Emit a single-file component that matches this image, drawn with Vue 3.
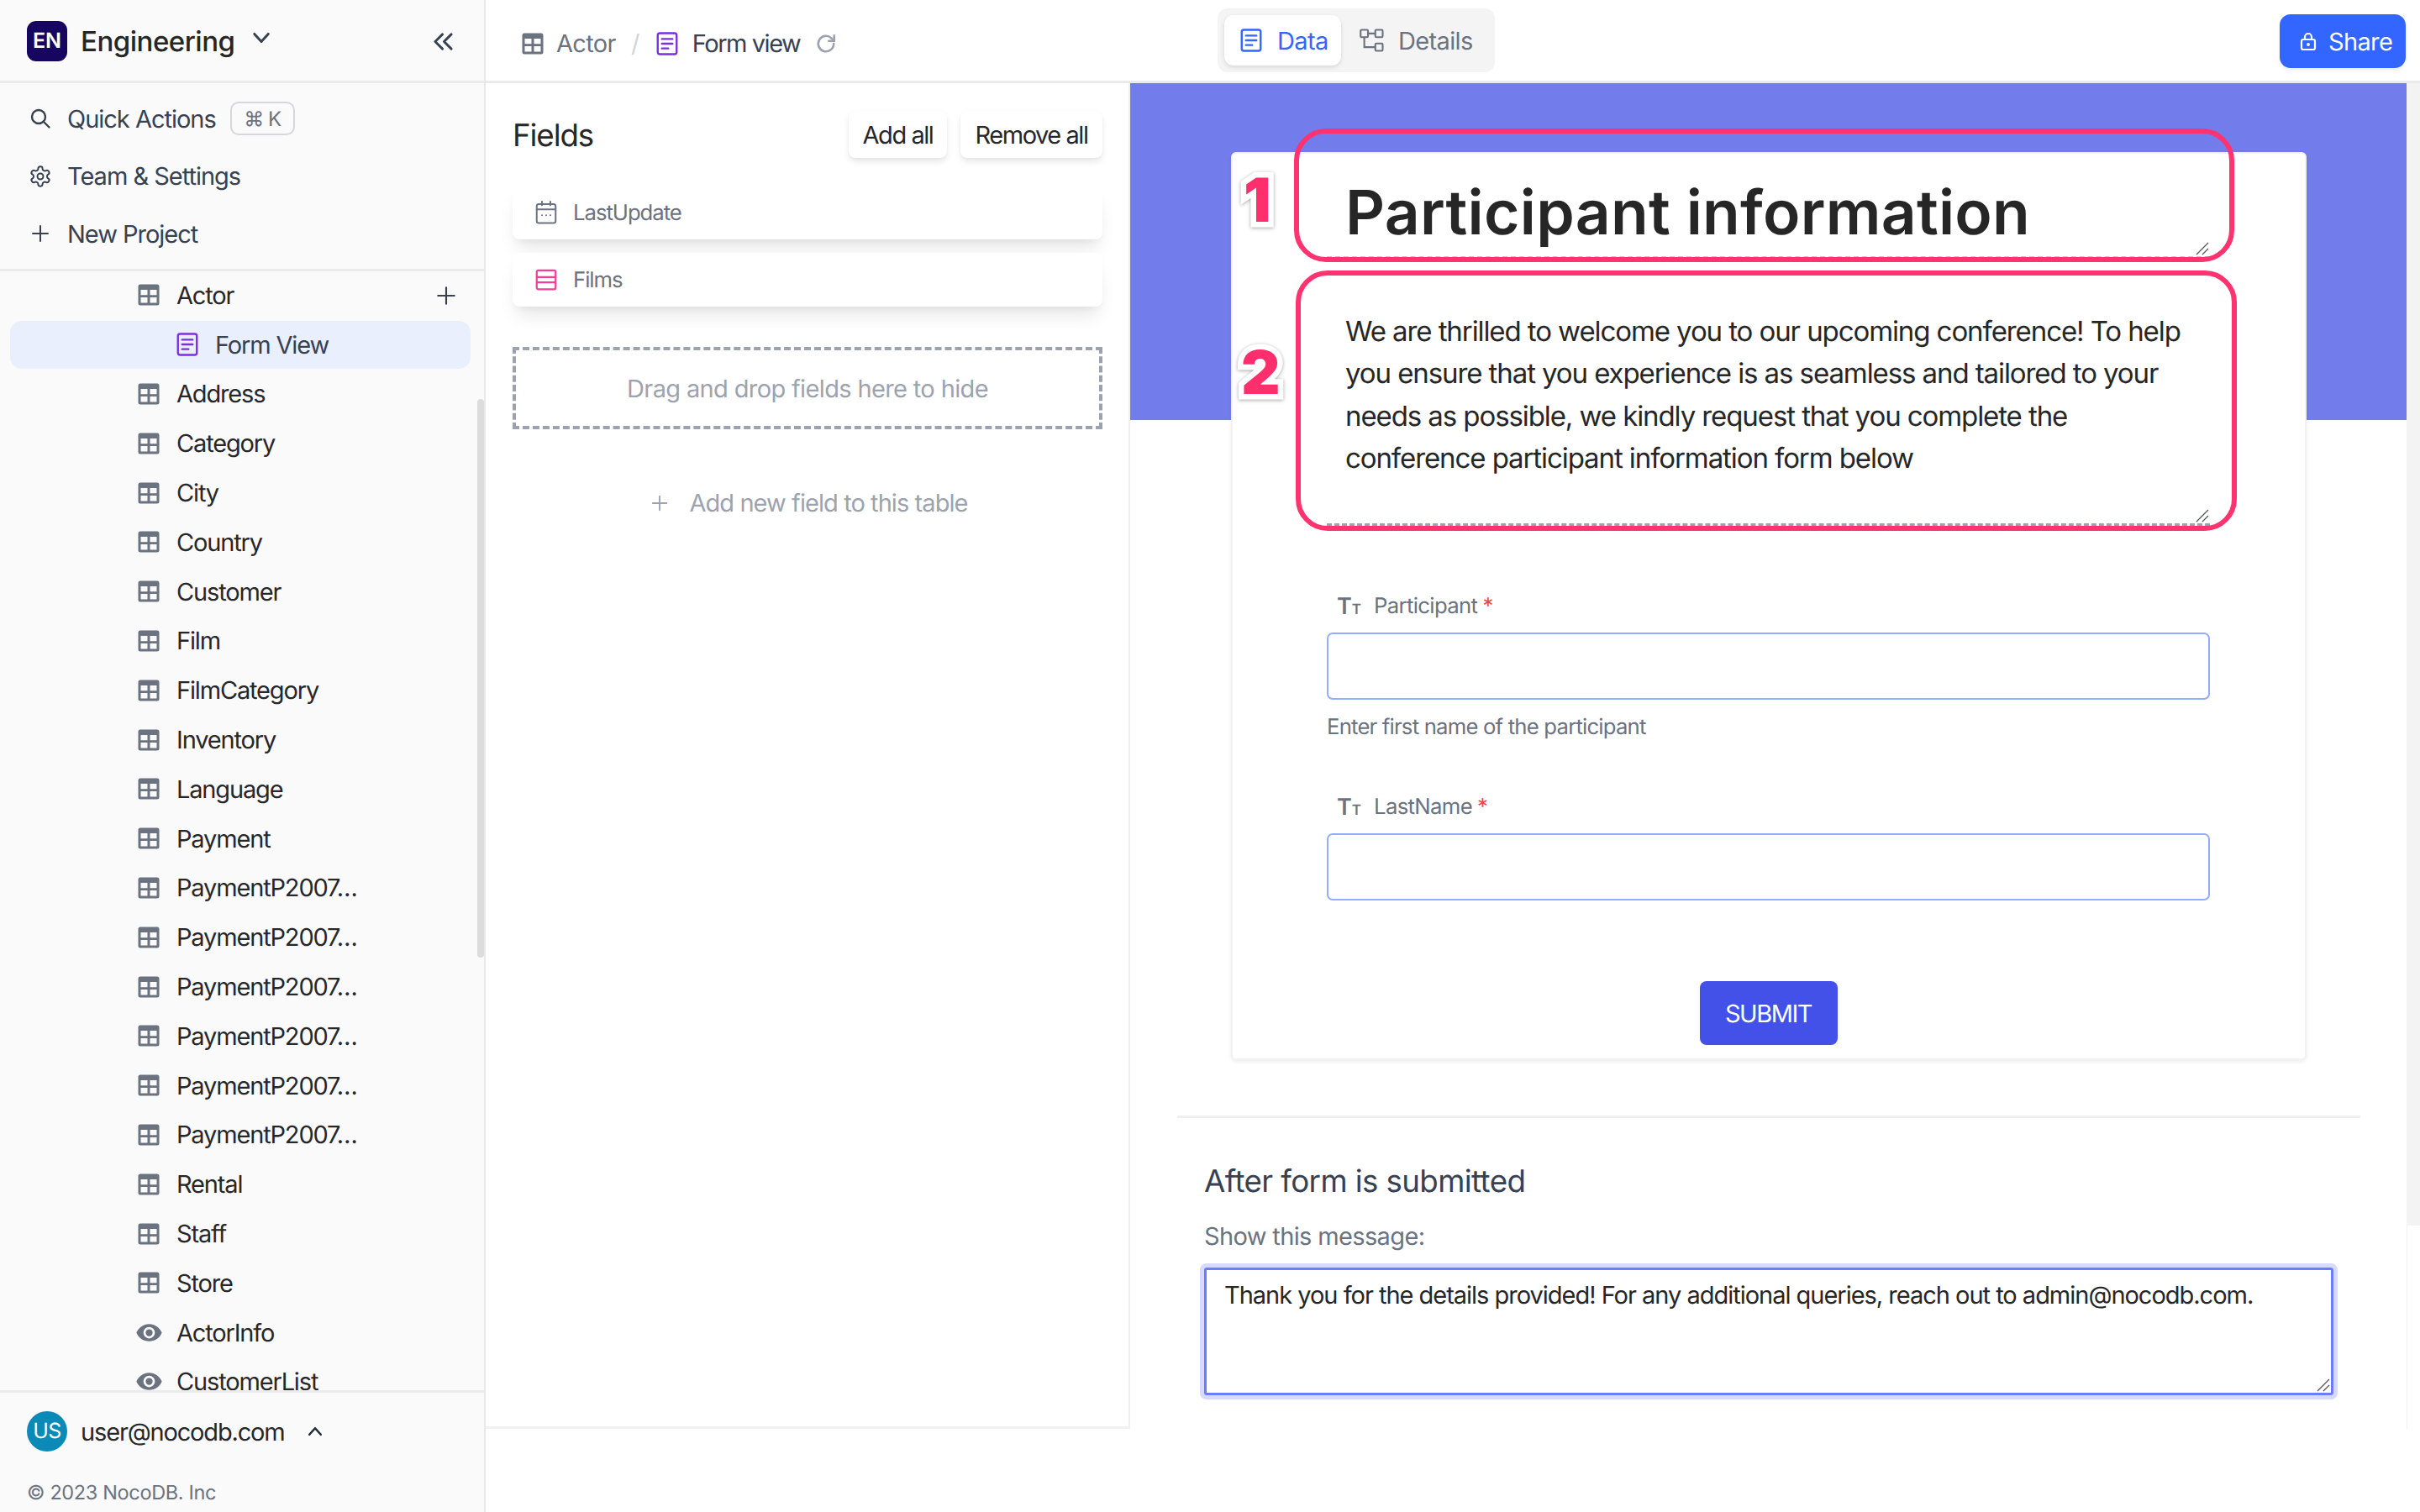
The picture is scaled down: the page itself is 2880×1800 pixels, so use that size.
<script setup>
const tables = ['Address','Category','City','Country','Customer','Film','FilmCategory','Inventory','Language','Payment','PaymentP2007…','PaymentP2007…','PaymentP2007…','PaymentP2007…','PaymentP2007…','PaymentP2007…','Rental','Staff','Store']
const views = ['ActorInfo','CustomerList']
</script>

<template>
  <div class="root">
    <svg class="defs" width="0" height="0">
      <symbol id="i-table" viewBox="0 0 24 24"><path fill="currentColor" fill-rule="evenodd" d="M4 2h16a2 2 0 0 1 2 2v16a2 2 0 0 1-2 2H4a2 2 0 0 1-2-2V4a2 2 0 0 1 2-2z M4.400 7.200v5h6.400v-5z M13.200 7.200v5h6.400v-5z M4.400 14.400v5.200h6.400v-5.200z M13.200 14.400v5.200h6.400v-5.200z"/></symbol>
      <symbol id="i-form" viewBox="0 0 24 24"><g fill="none" stroke="currentColor" stroke-width="1.900" stroke-linecap="round"><rect x="3" y="2" width="18" height="20" rx="2"/><path d="M7 7.500h10M7 12h10M7 16.500h6"/></g></symbol>
      <symbol id="i-eye" viewBox="0 0 24 24"><path fill="currentColor" d="M12 9a3 3 0 0 0-3 3 3 3 0 0 0 3 3 3 3 0 0 0 3-3 3 3 0 0 0-3-3m0 8a5 5 0 0 1-5-5 5 5 0 0 1 5-5 5 5 0 0 1 5 5 5 5 0 0 1-5 5m0-12.500C7 4.500 2.730 7.610 1 12c1.730 4.390 6 7.500 11 7.500s9.270-3.110 11-7.500c-1.730-4.390-6-7.500-11-7.500z"/></symbol>
      <symbol id="i-plus" viewBox="0 0 24 24"><path fill="none" stroke="currentColor" stroke-width="2" stroke-linecap="round" d="M12 3v18M3 12h18"/></symbol>
      <symbol id="i-grip" viewBox="0 0 16 16"><path fill="none" stroke="#555" stroke-width="1.300" d="M1 15L15 1M8 15l7-7"/></symbol>
    </svg>

    <aside class="sidebar">
      <header class="side-head">
        <span class="badge">EN</span>
        <span class="ws">Engineering</span>
        <svg class="chev" viewBox="0 0 24 24"><path fill="none" stroke="#374151" stroke-width="3.200" stroke-linecap="round" stroke-linejoin="round" d="M3 7l9 10 9-10"/></svg>
        <svg class="coll" viewBox="0 0 24 24"><path fill="none" stroke="#374151" stroke-width="3" stroke-linecap="round" stroke-linejoin="round" d="M11 3l-9 9 9 9M22 3l-9 9 9 9"/></svg>
      </header>
      <nav class="actions">
        <div class="act">
          <svg class="act-ic" viewBox="0 0 24 24"><g fill="none" stroke="#374151" stroke-width="2.400" stroke-linecap="round"><circle cx="10" cy="10" r="8"/><path d="M16 16l6.500 6.500"/></g></svg>
          <span>Quick Actions</span><kbd class="kbd">⌘ K</kbd>
        </div>
        <div class="act">
          <svg class="act-ic gear" viewBox="0 0 24 24"><g fill="none" stroke="#374151" stroke-width="1.700" stroke-linecap="round" stroke-linejoin="round"><path d="M12.220 2h-.44a2 2 0 0 0-2 2v.18a2 2 0 0 1-1 1.730l-.43.25a2 2 0 0 1-2 0l-.15-.08a2 2 0 0 0-2.730.73l-.22.38a2 2 0 0 0 .73 2.730l.15.1a2 2 0 0 1 1 1.720v.51a2 2 0 0 1-1 1.740l-.15.09a2 2 0 0 0-.73 2.730l.22.38a2 2 0 0 0 2.730.73l.15-.08a2 2 0 0 1 2 0l.43.25a2 2 0 0 1 1 1.730V20a2 2 0 0 0 2 2h.44a2 2 0 0 0 2-2v-.18a2 2 0 0 1 1-1.730l.43-.25a2 2 0 0 1 2 0l.15.08a2 2 0 0 0 2.730-.73l.22-.39a2 2 0 0 0-.73-2.730l-.15-.08a2 2 0 0 1-1-1.740v-.5a2 2 0 0 1 1-1.740l.15-.09a2 2 0 0 0 .73-2.730l-.22-.38a2 2 0 0 0-2.730-.73l-.15.08a2 2 0 0 1-2 0l-.43-.25a2 2 0 0 1-1-1.730V4a2 2 0 0 0-2-2z"/><circle cx="12" cy="12" r="3"/></g></svg>
          <span>Team &amp; Settings</span>
        </div>
        <div class="act">
          <svg class="act-ic plus-ic"><use href="#i-plus"/></svg>
          <span>New Project</span>
        </div>
      </nav>
      <div class="tree">
        <div class="row"><svg class="ic"><use href="#i-table"/></svg><span class="nm">Actor</span><svg class="row-add"><use href="#i-plus"/></svg></div>
        <div class="row active"><svg class="ic form"><use href="#i-form"/></svg><span class="nm">Form View</span></div>
        <div v-for="(t, i) in tables" :key="i" class="row"><svg class="ic"><use href="#i-table"/></svg><span class="nm">{{ t }}</span></div>
        <div v-for="v in views" :key="v" class="row"><svg class="ic eye"><use href="#i-eye"/></svg><span class="nm">{{ v }}</span></div>
        <div class="thumb"></div>
      </div>
      <footer class="side-foot">
        <div class="user">
          <span class="avatar">US</span>
          <span class="mail">user@nocodb.com</span>
          <svg class="up" viewBox="0 0 24 24"><path fill="none" stroke="#1f2937" stroke-width="3.400" stroke-linecap="round" stroke-linejoin="round" d="M3 17l9-10 9 10"/></svg>
        </div>
        <div class="copy">© 2023 NocoDB. Inc</div>
      </footer>
    </aside>

    <main class="main">
      <header class="topbar">
        <div class="crumbs">
          <svg class="crumb-ic"><use href="#i-table"/></svg>
          <span class="c1">Actor</span>
          <span class="slash">/</span>
          <svg class="crumb-ic form"><use href="#i-form"/></svg>
          <span class="c2">Form view</span>
          <svg class="refresh" viewBox="0 0 24 24"><g fill="none" stroke="#9ca3af" stroke-width="2.400" stroke-linecap="round" stroke-linejoin="round"><path d="M20.500 12a8.500 8.500 0 1 1-2.600-6.100L21 9"/><path d="M21 3v6h-6"/></g></svg>
        </div>
        <div class="tabs">
          <div class="tab on">
            <svg class="tab-ic"><use href="#i-form"/></svg><span>Data</span>
          </div>
          <div class="tab">
            <svg class="tab-ic" viewBox="0 0 24 24"><g fill="none" stroke="#6b7280" stroke-width="1.700"><rect x="1" y="2" width="7" height="7" rx="1"/><rect x="15" y="2" width="7" height="7" rx="1"/><rect x="15" y="15" width="7" height="7" rx="1"/><path d="M8 5.500h7M4.500 9v9.500H15"/></g></svg>
            <span>Details</span>
          </div>
        </div>
        <button class="share">
          <svg class="lock" viewBox="0 0 24 24"><g fill="none" stroke="#fff" stroke-width="2.200" stroke-linecap="round"><rect x="4" y="10" width="16" height="12" rx="2"/><path d="M8 10V7a4 4 0 0 1 8 0v3"/><circle cx="12" cy="16" r=".8"/></g></svg>
          <span>Share</span>
        </button>
      </header>

      <div class="content">
        <section class="fields">
          <div class="f-head">
            <h2 class="f-title">Fields</h2>
            <button class="mini">Add all</button>
            <button class="mini">Remove all</button>
          </div>
          <div class="f-card">
            <svg class="f-ic" viewBox="0 0 24 24"><g fill="none" stroke="#6b7280" stroke-width="1.600" stroke-linecap="round"><rect x="3" y="4" width="18" height="18" rx="2"/><path d="M3 9h18M8 1.500V5M16 1.500V5M8 14.500h.01M12 14.500h.01M16 14.500h.01"/></g></svg>
            <span>LastUpdate</span>
          </div>
          <div class="f-card">
            <svg class="f-ic" viewBox="0 0 24 24"><g fill="none" stroke="#f43f98" stroke-width="1.800"><rect x="3" y="3" width="18" height="18" rx="1.500"/><path d="M3 9.500h18M3 14.500h18"/></g></svg>
            <span>Films</span>
          </div>
          <div class="drop">Drag and drop fields here to hide</div>
          <div class="add-new"><svg class="add-ic"><use href="#i-plus"/></svg><span>Add new field to this table</span></div>
        </section>

        <section class="form-pane">
          <div class="form-wrap">
            <div class="card">
              <div class="ta title-ta">Participant information<svg class="grip"><use href="#i-grip"/></svg></div>
              <div class="ta desc-ta">We are thrilled to welcome you to our upcoming conference! To help you ensure that you experience is as seamless and tailored to your needs as possible, we kindly request that you complete the conference participant information form below<svg class="grip"><use href="#i-grip"/></svg></div>
              <div class="field first">
                <label class="lab"><span class="tt">T<small>T</small></span>Participant <em>*</em></label>
                <div class="inp"></div>
                <p class="help">Enter first name of the participant</p>
              </div>
              <div class="field second">
                <label class="lab"><span class="tt">T<small>T</small></span>LastName <em>*</em></label>
                <div class="inp"></div>
              </div>
              <div class="sub-row"><button class="submit">SUBMIT</button></div>

              <div class="mark m1">1</div>
              <div class="mark m2">2</div>
              <div class="anno a1"></div>
              <div class="anno a2"></div>
            </div>
            <div class="divider"></div>
            <div class="after">
              <h3 class="after-t">After form is submitted</h3>
              <p class="after-s">Show this message:</p>
              <div class="msg">Thank you for the details provided! For any additional queries, reach out to admin@nocodb.com.<svg class="grip"><use href="#i-grip"/></svg></div>
            </div>
          </div>
          <div class="rail"><div class="rail-track"></div></div>
        </section>
      </div>
    </main>
  </div>
</template>

<style>
html, body { margin: 0; background: #fff; }
</style>

<style scoped>
* { box-sizing: border-box; }
.defs { position: absolute; }
.root { width: 2880px; height: 1800px; display: flex; overflow: hidden; font-family: Inter, "Noto Sans", sans-serif; letter-spacing: -0.04em; text-rendering: geometricPrecision; color: #1f2937; background: #fff; }
button { font-family: inherit; letter-spacing: inherit; text-rendering: inherit; border: 0; padding: 0; }

.sidebar { width: 578px; flex: none; display: flex; flex-direction: column; background: #fafafa; border-right: 2px solid #e8e8e8; }
.side-head { height: 99px; flex: none; border-bottom: 3px solid #ebebeb; display: flex; align-items: center; padding: 2px 0 0 32px; }
.badge { width: 48px; height: 48px; border-radius: 11px; background: #17065f; color: #fff; font-size: 25px; font-weight: 600; display: flex; align-items: center; justify-content: center; letter-spacing: 0; }
.ws { margin-left: 16px; font-size: 33px; font-weight: 500; color: #262626; letter-spacing: -0.015em; }
.chev { width: 22px; height: 22px; margin-left: 21px; margin-top: -8px; }
.coll { width: 23px; height: 23px; margin-left: auto; margin-right: 37px; }
.actions { height: 224px; flex: none; padding-top: 8px; border-bottom: 3px solid #ebebeb; }
.act { height: 68.500px; display: flex; align-items: center; padding-left: 36px; font-size: 29px; color: #374151; letter-spacing: -0.035em; }
.act-ic { width: 24px; height: 24px; margin-right: 20px; flex: none; }
.act-ic.gear { width: 28px; height: 28px; margin: 0 18px 0 -2px; }
.plus-ic { color: #374151; }
.kbd { margin-left: 17px; width: 77px; height: 40px; border: 2px solid #d6d6db; border-radius: 10px; font: 24px Inter, sans-serif; color: #6b7280; display: flex; align-items: center; justify-content: center; }
.tree { flex: 1; min-height: 0; margin-top: -1px; overflow: hidden; position: relative; }
.row { height: 58.800px; display: flex; align-items: center; padding-left: 162px; font-size: 29px; color: #27272a; position: relative; letter-spacing: -0.04em; }
.ic { width: 30px; height: 30px; margin-right: 18px; color: #6b7280; flex: none; }
.ic.eye { width: 33px; height: 33px; margin: 0 16.500px 0 -1.500px; }
.nm { white-space: nowrap; }
.row-add { position: absolute; left: 518px; top: 17px; width: 26px; height: 26px; color: #374151; }
.row.active { padding-left: 208px; color: #374151; }
.row.active::before { content: ""; position: absolute; left: 12px; right: 16px; top: 1px; bottom: 1px; background: #e9effc; border-radius: 14px; }
.row.active > * { position: relative; }
.ic.form { color: #7c2fe0; width: 30px; margin-right: 18px; }
.thumb { position: absolute; right: 0; top: 153px; width: 8px; height: 665px; background: #dcdcdc; border-radius: 4px; }
.side-foot { flex: none; height: 145px; border-top: 3px solid #ebebeb; }
.user { display: flex; align-items: center; padding: 22px 0 0 32px; }
.avatar { width: 48px; height: 48px; border-radius: 50%; background: #0b8ab8; color: #fff; font-size: 25px; display: flex; align-items: center; justify-content: center; }
.mail { margin-left: 16px; font-size: 29px; color: #27272a; letter-spacing: -0.04em; }
.up { width: 18px; height: 18px; margin-left: 27px; }
.copy { margin: 34px 0 0 32px; font-size: 23.500px; color: #6b7280; letter-spacing: -0.015em; }

.main { flex: 1; min-width: 0; display: flex; flex-direction: column; }
.topbar { height: 99px; flex: none; border-bottom: 3px solid #ebebeb; display: flex; align-items: center; position: relative; }
.crumbs { display: flex; align-items: center; padding: 7px 0 0 41px; font-size: 29px; width: 871px; }
.crumb-ic { width: 30px; height: 30px; color: #6b7280; margin-right: 13px; }
.crumb-ic.form { color: #7c2fe0; }
.c1 { color: #6b7280; }
.slash { color: #d1d5db; margin: 0 18px 0 18px; }
.c2 { color: #374151; margin-left: 2px; letter-spacing: -0.05em; }
.refresh { width: 26px; height: 26px; margin-left: 18px; }
.tabs { display: flex; align-items: center; width: 330px; height: 76px; padding: 0 8px; background: #f4f4f5; border-radius: 12px; font-size: 29px; }
.tab { display: flex; align-items: center; height: 60px; color: #6b7280; padding-left: 22px; }
.tab.on { width: 139px; padding-left: 17px; background: #fff; color: #3366ff; border-radius: 11px; box-shadow: 0 2px 5px rgba(0,0,0,.12); }
.tab-ic { width: 30px; height: 30px; margin-right: 16px; color: #3366ff; }
.share { position: absolute; left: 2135px; top: 17px; width: 150px; height: 64px; background: #3366ff; color: #fff; border-radius: 13px; font-size: 29px; display: flex; align-items: center; padding-left: 22px; box-shadow: 0 3px 4px rgba(0,0,0,.06); }
.lock { width: 24px; height: 26px; margin-right: 12px; }

.content { flex: 1; min-height: 0; display: flex; }
.fields { width: 767px; height: 1602px; flex: none; padding: 0 31px 0 32px; border-bottom: 3px solid #f1f1f1; border-right: 2px solid #f1f1f1; }
.f-head { display: flex; align-items: center; height: 56px; margin-top: 33px; }
.f-title { flex: 1; margin: 0; font-size: 36.700px; font-weight: 400; color: #27272a; letter-spacing: -0.03em; }
.mini { height: 56px; background: #fff; border-radius: 8px; font-size: 29px; color: #27272a; width: 117px; margin-left: 16px; letter-spacing: -0.05em; box-shadow: 0 5px 8px -1px rgba(0,0,0,.1), 0 1px 3px rgba(0,0,0,.04); }
.mini:last-child { width: 169px; }
.f-card { height: 64px; margin-top: 16px; background: #fff; border-radius: 8px; display: flex; align-items: center; padding-left: 25px; font-size: 25.700px; color: #6b7280; letter-spacing: -0.04em; box-shadow: 0 16px 22px -6px rgba(0,0,0,.1), 0 5px 8px -3px rgba(0,0,0,.05); }
.f-card:nth-child(2) { margin-top: 33px; }
.f-ic { width: 30px; height: 30px; margin-right: 17px; }
.drop { height: 98px; margin-top: 48px; border: 4px dashed #9ca3af; display: flex; align-items: center; justify-content: center; font-size: 29px; color: #9ca3af; }
.add-new { display: flex; align-items: center; justify-content: center; margin-top: 70px; padding-left: 4px; font-size: 29px; color: #9ca3af; letter-spacing: -0.032em; }
.add-ic { width: 22px; height: 22px; margin-right: 24px; }

.form-pane { flex: 1; min-width: 0; display: flex; height: 1602px; }
.form-wrap { width: 1519px; flex: none; padding-top: 82px; background: linear-gradient(#737ceb 0, #737ceb 401px, #fff 401px); }
.card { position: relative; width: 1280px; height: 1081px; margin-left: 120px; background: #fff; border: 2px solid #f2f2f2; border-radius: 6px; padding: 38px 113px 0 112px; box-shadow: 0 2px 5px rgba(0,0,0,.08); }
.ta { position: relative; padding: 0 21px 0 22px; color: #262626; }
.grip { position: absolute; right: 1px; bottom: 1px; width: 16px; height: 16px; }
.title-ta { height: 86px; font-size: 73px; line-height: 64px; font-weight: 600; border-bottom: 2px dashed #c4c7cd; letter-spacing: 0.004em; white-space: nowrap; }
.desc-ta { height: 280px; margin-top: 39px; padding-top: 23px; font-size: 33px; line-height: 50.400px; border-bottom: 3px dashed #9ca3af; letter-spacing: -0.033em; }
.field.first { margin-top: 79px; }
.field.second { margin-top: 62px; }
.lab { display: flex; align-items: center; height: 32px; padding-left: 12px; font-size: 25.700px; color: #6b7280; }
.lab em { color: #ef4444; font-style: normal; margin-left: 6px; }
.tt { width: 44px; flex: none; font-size: 27px; font-weight: 600; color: #6b7280; letter-spacing: 0; }
.tt small { font-size: 17px; }
.inp { height: 80px; margin-top: 16px; border: 2px solid #93acfb; border-radius: 7px; background: #fff; }
.help { margin: 17px 0 0; font-size: 25.700px; line-height: 32px; color: #6b7280; letter-spacing: -0.031em; }
.sub-row { display: flex; justify-content: center; margin-top: 96px; }
.submit { width: 164px; height: 76px; background: #4351e8; color: #fff; border-radius: 8px; font-size: 29px; letter-spacing: -0.05em; }
.mark { position: absolute; font: 900 72px/72px Inter, sans-serif; color: #ff2f6e; -webkit-text-stroke: 13px #fff; paint-order: stroke fill; filter: drop-shadow(0 1px 2px rgba(0,0,0,.35)); letter-spacing: 0; }
.m1 { left: 13px; top: 20px; }
.m2 { left: 10px; top: 225px; }
.anno { position: absolute; border: 6px solid #ff3370; border-radius: 38px; pointer-events: none; }
.a1 { left: 73px; top: -30px; width: 1119px; height: 159px; }
.a2 { left: 75px; top: 139px; width: 1120px; height: 310px; }

.divider { height: 3px; margin: 66px 0 0 56px; background: #f0f0f0; width: 1408px; }
.after { padding: 52px 0 0 88px; }
.after-t { margin: 0; font-size: 36.700px; font-weight: 400; color: #374151; line-height: 46px; letter-spacing: -0.016em; }
.after-s { margin: 23px 0 0; font-size: 29px; line-height: 40px; color: #6b7280; }
.msg { position: relative; height: 152px; margin-top: 17px; width: 1344px; border: 3px solid #6a7cff; border-radius: 3px; box-shadow: 0 0 0 5px #d6daff; padding: 12px 21px; font-size: 29px; line-height: 36px; color: #262626; letter-spacing: -0.035em; }

.rail { flex: 1; border-left: 1px solid #f1f1f1; }
.rail-track { height: 1360px; background: #f3f3f3; margin-left: -1px; }
</style>
